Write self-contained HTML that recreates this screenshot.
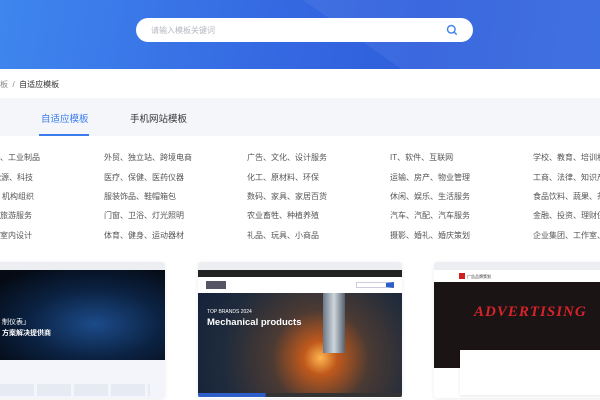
<!DOCTYPE html>
<html><head><meta charset="utf-8"><style>
*{margin:0;padding:0;box-sizing:border-box}
body{width:600px;height:400px;overflow:hidden;position:relative;background:#fff;font-family:"Liberation Sans","Noto Sans CJK SC",sans-serif}
.hdr{position:absolute;left:0;top:0;width:600px;height:69px;background:linear-gradient(100deg,#3f86ee 0%,#3569e2 45%,#2f5fdc 70%,#3468e0 100%);overflow:hidden}
.hdr .d1{position:absolute;left:360px;top:-40px;width:400px;height:160px;background:rgba(255,255,255,.06);transform:skewX(55deg)}
.search{position:absolute;left:136px;top:18px;width:337px;height:24px;background:#fff;border-radius:12px}
.search span{position:absolute;left:15px;top:7px;font-size:8px;color:#b5b9c2}
.bc{position:absolute;top:79px;font-size:8px;color:#333}
.tabs{position:absolute;left:0;top:98px;width:600px;height:38px;background:#f5f6fa}
.t{position:absolute;top:13px;font-size:9.5px;color:#333}
.cat{position:absolute;font-size:8px;color:#555;white-space:nowrap}
.card{position:absolute;top:262px;height:136px;background:#fff;border-radius:3px;overflow:hidden;box-shadow:0 1px 4px rgba(0,0,0,.08)}
.card .bar{height:8px;background:#eceef2}
</style></head><body>
<div class="hdr"><div class="d1"></div>
<div class="search"><span>请输入模板关键词</span>
<svg style="position:absolute;left:310px;top:6px" width="12" height="12" viewBox="0 0 12 12"><circle cx="5.3" cy="5.3" r="3.8" fill="none" stroke="#3f80ee" stroke-width="1.4"/><path d="M8 8l2.3 2.3" stroke="#3f80ee" stroke-width="1.4" stroke-linecap="round"/></svg></div></div>
<div class="bc" style="left:0;color:#888">板 &nbsp;/ &nbsp;<span style="color:#333">自适应模板</span></div>
<div class="tabs">
<div class="t" style="left:41px;color:#3a7cf0">自适应模板</div>
<div class="t" style="left:130px">手机网站模板</div>
<div style="position:absolute;left:39px;top:36px;width:50px;height:2px;background:#3a7cf0"></div>
</div>
<div class="cat" style="left:-16px;top:152px">冶金、工业制品</div>
<div class="cat" style="left:-15px;top:172px">、能源、科技</div>
<div class="cat" style="left:-6px;top:191px">、机构组织</div>
<div class="cat" style="left:-16px;top:210px">旅、旅游服务</div>
<div class="cat" style="left:-16px;top:230px">装、室内设计</div>
<div class="cat" style="left:104px;top:152px">外贸、独立站、跨境电商</div>
<div class="cat" style="left:104px;top:172px">医疗、保健、医药仪器</div>
<div class="cat" style="left:104px;top:191px">服装饰品、鞋帽箱包</div>
<div class="cat" style="left:104px;top:210px">门窗、卫浴、灯光照明</div>
<div class="cat" style="left:104px;top:230px">体育、健身、运动器材</div>
<div class="cat" style="left:247px;top:152px">广告、文化、设计服务</div>
<div class="cat" style="left:247px;top:172px">化工、原材料、环保</div>
<div class="cat" style="left:247px;top:191px">数码、家具、家居百货</div>
<div class="cat" style="left:247px;top:210px">农业畜牲、种植养殖</div>
<div class="cat" style="left:247px;top:230px">礼品、玩具、小商品</div>
<div class="cat" style="left:390px;top:152px">IT、软件、互联网</div>
<div class="cat" style="left:390px;top:172px">运输、房产、物业管理</div>
<div class="cat" style="left:390px;top:191px">休闲、娱乐、生活服务</div>
<div class="cat" style="left:390px;top:210px">汽车、汽配、汽车服务</div>
<div class="cat" style="left:390px;top:230px">摄影、婚礼、婚庆策划</div>
<div class="cat" style="left:533px;top:152px">学校、教育、培训机构</div>
<div class="cat" style="left:533px;top:172px">工商、法律、知识产权</div>
<div class="cat" style="left:533px;top:191px">食品饮料、蔬果、茶</div>
<div class="cat" style="left:533px;top:210px">金融、投资、理财保险</div>
<div class="cat" style="left:533px;top:230px">企业集团、工作室、</div>

<div class="card" style="left:-10px;width:175px">
<div class="bar"></div>
<div style="height:90px;background:radial-gradient(ellipse at 60% 60%,#1c4b8a 0%,#0b2242 45%,#050a14 85%)"></div>
<div style="position:absolute;left:12px;top:55px;font-size:7px;color:#fff;line-height:11px">制仪表」<br><b>方案解决提供商</b></div>
<div style="height:38px;background:#f3f5fa;position:relative">
<div style="position:absolute;left:10px;top:24px;width:150px;height:12px;background:repeating-linear-gradient(90deg,#e6eaf2 0 34px,#f3f5fa 34px 37px)"></div></div>
</div>

<div class="card" style="left:198px;width:204px">
<div class="bar"></div>
<div style="height:7px;background:#222"></div>
<div style="height:16px;background:#fff;position:relative"><div style="position:absolute;left:8px;top:4px;width:20px;height:8px;background:#556"></div><div style="position:absolute;right:8px;top:5px;width:38px;height:6px;border:1px solid #ccd;border-right:8px solid #2e5ec8"></div></div>
<div style="height:100px;background:radial-gradient(circle at 60% 65%,#ffb650 0%,#c0591c 12%,#4b3a33 35%,#1f2b3c 70%,#15213a 100%);position:relative">
<div style="position:absolute;left:125px;top:0;width:22px;height:60px;background:linear-gradient(90deg,#6b7888,#cfd6dd,#55606c)"></div>
<div style="position:absolute;left:9px;top:16px;font-size:5px;color:#fff">TOP BRANDS 2024</div>
<div style="position:absolute;left:9px;top:24px;font-size:9.5px;font-weight:bold;color:#fff">Mechanical products</div>
</div>
<div style="height:4px;background:linear-gradient(90deg,#2e5ec8 0 33%,#333 33%)"></div>
</div>

<div class="card" style="left:434px;width:180px">
<div class="bar"></div>
<div style="height:12px;background:#fff;position:relative"><div style="position:absolute;left:25px;top:3px;width:6px;height:6px;background:#c22"></div><div style="position:absolute;left:33px;top:4px;font-size:4px;color:#333">广告品牌策划</div></div>
<div style="height:86px;background:#1a1414;position:relative">
<div style="position:absolute;left:40px;top:22px;font-size:15px;font-weight:bold;font-style:italic;color:#d8232a;letter-spacing:1px;font-family:'Liberation Serif',serif">ADVERTISING</div></div>
<div style="position:absolute;left:26px;top:88px;width:160px;height:45px;background:#fff;box-shadow:0 1px 3px rgba(0,0,0,.1)"></div>
</div>
</body></html>
